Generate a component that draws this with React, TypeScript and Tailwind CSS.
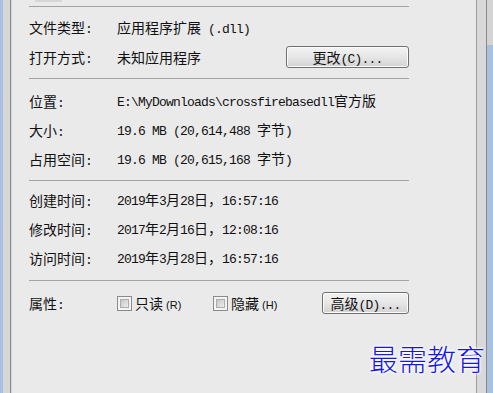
import React from "react";

const CJK = /[\u2E80-\u9FFF\uFF00-\uFFEF\u3000-\u303F]/;
const MONO = "text-[13px] tracking-[-0.8px] font-['Liberation_Mono',monospace]";
const SMALL = "text-[11px] font-['Liberation_Sans',sans-serif]";

function Mixed({ text, latin = MONO }: { text: string; latin?: string }) {
  const runs: { k: boolean; s: string }[] = [];
  for (const ch of text) {
    const k = CJK.test(ch);
    const last = runs[runs.length - 1];
    if (last && last.k === k) last.s += ch;
    else runs.push({ k, s: ch });
  }
  return (
    <span className="whitespace-pre leading-none">
      {runs.map((r, i) => (
        <span
          key={i}
          className={r.k ? "text-[14px] font-['Noto_Sans_CJK_SC',sans-serif]" : latin}
        >
          {r.s}
        </span>
      ))}
    </span>
  );
}

function Sep() {
  return <div className="h-px w-full bg-[#a3a3a3]" />;
}

function Label({ text }: { text: string }) {
  return (
    <div className="w-[88px] shrink-0">
      <Mixed text={text} />
    </div>
  );
}

function Row({ label, value, tall }: { label: string; value: string; tall?: boolean }) {
  return (
    <div className={tall ? "flex h-[30px] items-center" : "flex h-[29px] items-center"}>
      <Label text={label} />
      <Mixed text={value} />
    </div>
  );
}

function Button({ text, w }: { text: string; w: string }) {
  return (
    <div
      className={`ml-auto flex h-[22px] ${w} items-center justify-center rounded-[3px] border border-[#707070] bg-gradient-to-b from-[#f3f3f3] via-[#e6e6e6] to-[#d2d2d2] shadow-[inset_0_0_0_1px_#fbfbfb]`}
    >
      <Mixed text={text} />
    </div>
  );
}

function Checkbox() {
  return (
    <div className="h-[15px] w-[15px] shrink-0 border border-[#8a8b8b] bg-[#f4f4f4] p-[2px]">
      <div className="h-full w-full border border-[#a9acb0] bg-gradient-to-br from-[#c6c6c6] to-[#eeeeee]" />
    </div>
  );
}

export default function App() {
  return (
    <div className="relative flex h-[393px] w-[493px] overflow-hidden bg-[#eaeaea] text-[#111]">
      {/* left window frame */}
      <div className="w-[3px] bg-[#a9c1de]" />
      <div className="w-[7px] bg-[#d7d7d7]" />
      <div className="w-px bg-[#8c8c8c]" />
      <div className="w-px bg-[#d4d4d4]" />

      {/* content */}
      <div className="flex-1 pl-[17px]">
        <div className="flex w-[380px] flex-col">
          <div className="h-[6px]">
            <div className="ml-[6px] h-[2px] w-[27px] bg-[#d6d6d6]" />
          </div>
          <Sep />
          <div className="h-[5px]" />
          <Row tall label="文件类型:" value="应用程序扩展 (.dll)" />
          <div className="flex h-[30px] items-center">
            <Label text="打开方式:" />
            <Mixed text="未知应用程序" />
            <Button text="更改(C)..." w="w-[123px]" />
          </div>
          <div className="h-[6px]" />
          <Sep />
          <div className="h-[7px]" />
          <Row label="位置:" value="E:\MyDownloads\crossfirebasedll官方版" />
          <Row label="大小:" value="19.6 MB (20,614,488 字节)" />
          <Row label="占用空间:" value="19.6 MB (20,615,168 字节)" />
          <div className="h-[7px]" />
          <Sep />
          <div className="h-[4px]" />
          <Row label="创建时间:" value="2019年3月28日，16:57:16" />
          <Row label="修改时间:" value="2017年2月16日，12:08:16" />
          <Row label="访问时间:" value="2019年3月28日，16:57:16" />
          <div className="h-[8px]" />
          <Sep />
          <div className="h-[11px]" />
          <div className="flex h-[22px] items-center">
            <Label text="属性:" />
            <div className="flex w-[96px] items-center gap-[3px]">
              <Checkbox />
              <Mixed text="只读 (R)" latin={SMALL} />
            </div>
            <div className="flex items-center gap-[3px]">
              <Checkbox />
              <Mixed text="隐藏 (H)" latin={SMALL} />
            </div>
            <Button text="高级(D)..." w="w-[87px]" />
          </div>
        </div>
      </div>

      {/* right window frame */}
      <div className="w-px bg-[#9d9d9d]" />
      <div className="w-[9px] bg-[#d9d9d9]" />
      <div className="w-px bg-[#888888]" />
      <div className="flex w-[6px] flex-col">
        <div className="h-[45px] bg-[#d4d4d4]" />
        <div className="flex-1 bg-[#a9c1de]" />
      </div>

      {/* watermark */}
      <div className="absolute left-[369px] top-[344px] whitespace-nowrap font-['Noto_Sans_CJK_SC',sans-serif] text-[29px] font-light leading-none text-[#1616e8] [text-shadow:0_0_2px_#fff,0_0_2px_#fff,0_0_3px_#fff,0_0_4px_#fff]">
        最需教育
      </div>
    </div>
  );
}
